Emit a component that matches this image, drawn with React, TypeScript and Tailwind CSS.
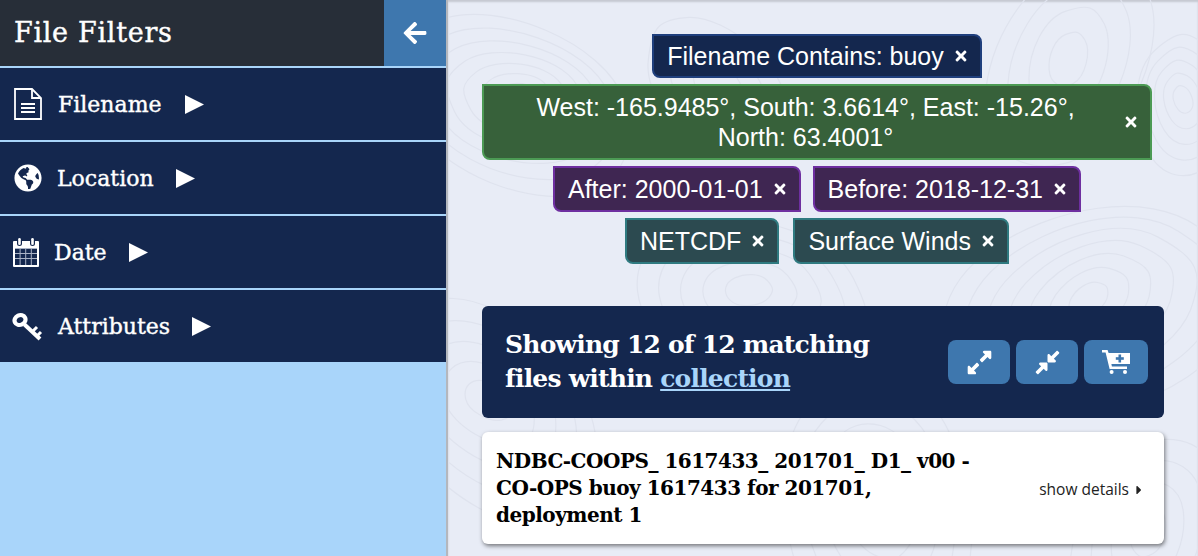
import React from 'react'
import { FaArrowLeft, FaTimes, FaGlobeAmericas, FaExpandAlt, FaCompressAlt, FaCaretRight } from 'react-icons/fa'

const serif = "font-['DejaVu_Serif',serif]"
const thick = '[-webkit-text-stroke:0.4px_white]'

function FileIcon() {
  return (
    <svg width="28" height="32" viewBox="0 0 28 32" fill="none" stroke="white" strokeWidth="1.8">
      <path d="M1 1h17l9 9v21H1z" />
      <path d="M18 1v9h9" />
      <path d="M7 16h14M7 20h14M7 24h14" strokeWidth="2" />
    </svg>
  )
}

function CalendarIcon() {
  return (
    <svg width="26" height="30" viewBox="0 0 26 30">
      <path fill="white" d="M1 4h24a1 1 0 0 1 1 1v24a1 1 0 0 1-1 1H1a1 1 0 0 1-1-1V5a1 1 0 0 1 1-1z" />
      <rect x="2" y="11" width="22" height="17" fill="#aab3c6" />
      <g fill="#14274e">
        <rect x="2" y="12" width="4.6" height="4" /><rect x="7.6" y="12" width="4.6" height="4" /><rect x="13.2" y="12" width="4.6" height="4" /><rect x="18.8" y="12" width="5.2" height="4" />
        <rect x="2" y="17" width="4.6" height="4" /><rect x="7.6" y="17" width="4.6" height="4" /><rect x="13.2" y="17" width="4.6" height="4" /><rect x="18.8" y="17" width="5.2" height="4" />
        <rect x="2" y="22" width="4.6" height="6" /><rect x="7.6" y="22" width="4.6" height="6" /><rect x="13.2" y="22" width="4.6" height="6" /><rect x="18.8" y="22" width="5.2" height="6" />
        <rect x="4" y="0" width="5" height="9" rx="2.5" /><rect x="17" y="0" width="5" height="9" rx="2.5" />
      </g>
      <rect x="5.2" y="1" width="2.6" height="7" rx="1.3" fill="white" />
      <rect x="18.2" y="1" width="2.6" height="7" rx="1.3" fill="white" />
    </svg>
  )
}

function KeyIcon() {
  return (
    <svg width="31" height="29" viewBox="0 0 31 29" fill="none" stroke="white">
      <ellipse cx="8" cy="8" rx="5.6" ry="4.8" strokeWidth="4.2" transform="rotate(-25 8 8)" />
      <path d="M12.5 12.5L28 27" strokeWidth="4" />
      <path d="M20 20l5-5M25 24l4-4" strokeWidth="3" />
    </svg>
  )
}

function CartIcon() {
  return (
    <svg width="28" height="24" viewBox="0 0 28 24" fill="white">
      <path d="M0 0h5.6l1 3H28v11H9.4l.5 2.4H25V19H7.6L3.6 2.6H0z" />
      <rect x="16.5" y="4.5" width="2.6" height="8" fill="#3e77ae" />
      <rect x="13.8" y="7.2" width="8" height="2.6" fill="#3e77ae" />
      <circle cx="9.6" cy="22" r="2" />
      <circle cx="23" cy="22" r="2" />
    </svg>
  )
}

function Triangle() {
  return (
    <svg width="19" height="19" viewBox="0 0 19 19" fill="white" className="ml-[7px]">
      <path d="M0 0l19 9.5L0 19z" />
    </svg>
  )
}

const blobs = [
  { x: 70, y: 95, r: 105, n: 7 },
  { x: 270, y: 85, r: 70, n: 3 },
  { x: 735, y: 100, r: 60, n: 5 },
  { x: 620, y: 60, r: 95, n: 4 },
  { x: 640, y: 300, r: 130, n: 7 },
  { x: 300, y: 290, r: 100, n: 5 },
  { x: 40, y: 400, r: 110, n: 5 },
  { x: 430, y: 500, r: 120, n: 5 },
  { x: 700, y: 530, r: 90, n: 4 },
]

function Contours() {
  return (
    <svg className="absolute inset-0 h-full w-full" viewBox="0 0 750 556" fill="none" stroke="#dfe3ee" strokeWidth="1.2">
      {blobs.map((b, i) =>
        Array.from({ length: b.n }, (_, k) => {
          const s = (b.r * (k + 1)) / b.n
          return (
            <path
              key={`${i}-${k}`}
              vectorEffect="non-scaling-stroke"
              transform={`translate(${b.x} ${b.y + k * 2}) rotate(${i * 35 + k * 4}) scale(${s} ${s * 0.78})`}
              d="M-1-.6C-.6-1.1.5-1.15.9-.6S1.15.6.6.85-.7 1-1 .5-1.3-.2-1-.6z"
            />
          )
        }),
      )}
    </svg>
  )
}

function Chip({ label, color, border, className }: { label: React.ReactNode; color: string; border: string; className?: string }) {
  return (
    <div className={`flex items-center gap-[9px] rounded-tr-lg rounded-bl-lg border-2 pl-[13px] pr-[11px] text-[25px] leading-[30px] text-white ${color} ${border} ${className ?? ''}`}>
      {label}
      <FaTimes className="shrink-0 text-[16px]" />
    </div>
  )
}

const menu = [
  { name: 'Filename', icon: <FileIcon />, pad: 'pl-[14px]', gap: 'gap-[16px]' },
  { name: 'Location', icon: <FaGlobeAmericas size={28} />, pad: 'pl-[14px]', gap: 'gap-[15px]' },
  { name: 'Date', icon: <CalendarIcon />, pad: 'pl-[13px]', gap: 'gap-[15px]' },
  { name: 'Attributes', icon: <KeyIcon />, pad: 'pl-[12px]', gap: 'gap-[15px]' },
]

function Wide({ children }: { children: React.ReactNode }) {
  return <span className="tracking-[6px]">{children}</span>
}

export default function App() {
  return (
    <div className="flex h-[556px] w-[1198px] overflow-hidden bg-[#e8ecf6]">
      <aside className="flex h-full w-[448px] shrink-0 flex-col border-r-2 border-[#b4b7bd] bg-[#a9d5fa]">
        <div className="flex h-[66px] items-center justify-between bg-[#272e38]">
          <h1 className={`${serif} ${thick} pl-[14px] text-[27px] font-normal tracking-[0.7px] text-white`}>File Filters</h1>
          <button className="flex h-full w-[62px] items-center justify-center bg-[#3e77ae] text-white">
            <FaArrowLeft size={26} />
          </button>
        </div>
        {menu.map((m) => (
          <div key={m.name} className={`flex h-[74px] items-center border-t-2 border-[#a9d5fa] bg-[#14274e] text-white ${m.pad} ${m.gap}`}>
            {m.icon}
            <span className={`${serif} ${thick} text-[22px]`}>{m.name}</span>
            <Triangle />
          </div>
        ))}
      </aside>
      <main className="relative flex-1 px-[34px] shadow-[inset_0_2px_2px_rgba(0,0,0,0.15)]">
        <Contours />
        <div className="relative flex flex-col items-start pt-[34px]">
          <div className="flex w-[670px] flex-col items-center gap-[6px] font-['Liberation_Sans',sans-serif]">
            <Chip label="Filename Contains: buoy" color="bg-[#14274e]" border="border-[#1f3f7d]" className="h-[44px]" />
            <Chip
              label={<span className="flex-1 text-center">West: -165.9485°, South: 3.6614°, East: -15.26°,<br />North: 63.4001°</span>}
              color="bg-[#37613a]"
              border="border-[#4c9a54]"
              className="h-[76px] w-[670px]"
            />
            <div className="flex gap-[12px]">
              <Chip label="After: 2000-01-01" color="bg-[#3f2652]" border="border-[#6e2fa0]" className="h-[46px]" />
              <Chip label="Before: 2018-12-31" color="bg-[#3f2652]" border="border-[#6e2fa0]" className="h-[46px]" />
            </div>
            <div className="flex gap-[14px]">
              <Chip label="NETCDF" color="bg-[#2c4a50]" border="border-[#2f7a80]" className="h-[46px]" />
              <Chip label="Surface Winds" color="bg-[#2c4a50]" border="border-[#2f7a80]" className="h-[46px]" />
            </div>
          </div>
          <section className="mt-[42px] flex h-[112px] w-full items-center justify-between rounded-md bg-[#14274e] pl-[23px] pr-[16px]">
            <h2 className={`${serif} text-[25px] leading-[34px] font-bold tracking-[-0.8px] text-white`}>
              Showing 12 of 12 matching<br />files within <a className="text-[#a9d5fa] underline">collection</a>
            </h2>
            <div className="flex gap-[6px]">
              <button className="flex h-[44px] w-[62px] items-center justify-center rounded-lg bg-[#3e77ae] text-white"><FaExpandAlt size={27} /></button>
              <button className="flex h-[44px] w-[62px] items-center justify-center rounded-lg bg-[#3e77ae] text-white"><FaCompressAlt size={27} /></button>
              <button className="flex h-[44px] w-[64px] items-center justify-center rounded-lg bg-[#3e77ae] text-white"><CartIcon /></button>
            </div>
          </section>
          <article className="mt-[14px] flex h-[112px] w-full items-center justify-between rounded-md bg-white pl-[14px] pr-[18px] shadow-[1px_2px_4px_rgba(0,0,0,0.5)]">
            <h3 className={`${serif} text-[20px] leading-[27px] font-bold tracking-[-0.5px] text-black`}>
              NDBC-COOPS<Wide>_</Wide>1617433<Wide>_</Wide>201701<Wide>_</Wide>D1<Wide>_</Wide>v00 -<br />CO-OPS buoy 1617433 for 201701,<br />deployment 1
            </h3>
            <div className="flex items-center gap-[3px] pt-[4px] font-['Open_Sans',sans-serif] text-[15.5px] text-[#222]">
              show details <FaCaretRight size={14} />
            </div>
          </article>
        </div>
      </main>
    </div>
  )
}
